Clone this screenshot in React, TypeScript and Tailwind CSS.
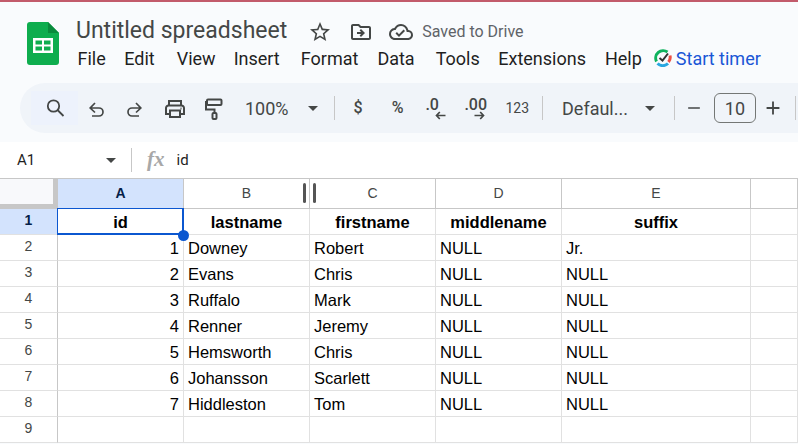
import { MdArrowDropDown, MdOutlineCloudDone, MdOutlineDriveFileMove, MdOutlineStarBorder, MdAdd, MdRemove } from 'react-icons/md'

const menus = [
  { label: 'File', cls: 'ml-[1.500px]' },
  { label: 'Edit', cls: 'ml-[18.500px]' },
  { label: 'View', cls: 'ml-[22px]' },
  { label: 'Insert', cls: 'ml-[18px]' },
  { label: 'Format', cls: 'ml-[21px]' },
  { label: 'Data', cls: 'ml-[19px]' },
  { label: 'Tools', cls: 'ml-[21px]' },
  { label: 'Extensions', cls: 'ml-[18.500px]' },
  { label: 'Help', cls: 'ml-[19px]' },
]
const rows = [
  ['1', 'Downey', 'Robert', 'NULL', 'Jr.'],
  ['2', 'Evans', 'Chris', 'NULL', 'NULL'],
  ['3', 'Ruffalo', 'Mark', 'NULL', 'NULL'],
  ['4', 'Renner', 'Jeremy', 'NULL', 'NULL'],
  ['5', 'Hemsworth', 'Chris', 'NULL', 'NULL'],
  ['6', 'Johansson', 'Scarlett', 'NULL', 'NULL'],
  ['7', 'Hiddleston', 'Tom', 'NULL', 'NULL'],
]

function SheetsLogo() {
  return (
    <svg width="32" height="43" viewBox="0 0 32 43" className="shrink-0">
      <path d="M3 0H21L32 11V40a3 3 0 0 1-3 3H3a3 3 0 0 1-3-3V3a3 3 0 0 1 3-3Z" fill="#0ead4e" />
      <path d="M21 0L32 11H21Z" fill="#0a8a3c" />
      <path d="M6 16H26V31H6ZM8.500 18.500V22.500H15V18.500ZM17 18.500V22.500H23.500V18.500ZM8.500 24.500V28.500H15V24.500ZM17 24.500V28.500H23.500V24.500Z" fill="#fff" fillRule="evenodd" />
    </svg>
  )
}

function TimerLogo() {
  return (
    <svg width="18" height="18" viewBox="0 0 18 18" className="shrink-0">
      <path d="M13.500 3A7.500 7.500 0 0 0 2.500 12.500" fill="none" stroke="#10b35e" strokeWidth="3" />
      <path d="M16 6.500A7.500 7.500 0 0 1 14.500 13" fill="none" stroke="#ee4f43" strokeWidth="3" />
      <path d="M3.500 14.500A7.500 7.500 0 0 0 14 14.500" fill="none" stroke="#2ba7e0" strokeWidth="3" />
      <path d="M5.500 9L8.500 11.500L14 4.500" fill="none" stroke="#333" strokeWidth="2" />
    </svg>
  )
}

function SearchIcon() {
  return (
    <svg width="24" height="24" viewBox="0 0 24 24" fill="none" stroke="currentColor" strokeWidth="1.800">
      <circle cx="10.500" cy="10" r="5.700" />
      <path d="M14.500 14L20.500 20" />
    </svg>
  )
}

function UndoIcon({ className }: { className?: string }) {
  return (
    <svg width="22" height="22" viewBox="0 0 22 22" fill="none" stroke="currentColor" strokeWidth="1.700" className={className}>
      <path d="M10 6L5.200 11L10 15.500M5.200 11H14a4 4 0 0 1 0 8H7" />
    </svg>
  )
}

function PrintIcon({ className }: { className?: string }) {
  return (
    <svg width="24" height="24" viewBox="0 0 24 24" fill="none" stroke="currentColor" strokeWidth="2" className={className}>
      <path d="M6 9.500V5H18V9.500" />
      <path d="M6 18H3V12a2.500 2.500 0 0 1 2.500-2.500h13A2.500 2.500 0 0 1 21 12V18H18" />
      <rect x="7" y="14.500" width="10" height="6.500" />
      <path d="M17.500 12.500h1" />
    </svg>
  )
}

function PaintIcon({ className }: { className?: string }) {
  return (
    <svg width="24" height="24" viewBox="0 0 24 24" fill="none" stroke="currentColor" strokeWidth="2" className={className}>
      <rect x="6" y="3.500" width="14.500" height="5.500" rx="1" />
      <path d="M6 6H5V13.500H13.500V17" />
      <rect x="11.500" y="17" width="4" height="6" rx="1" />
    </svg>
  )
}

function Sep() {
  return <div className="w-px h-6 bg-[#c7c7c7] shrink-0" />
}

function Arrow({ flip }: { flip?: boolean }) {
  return (
    <svg width="11" height="9" viewBox="0 0 11 9" className={flip ? 'absolute left-[10px] top-[16px] rotate-180' : 'absolute left-[10px] top-[16px]'}>
      <path d="M10.500 4.500H1.500M4.800 1L1.500 4.500L4.800 8" fill="none" stroke="#444746" strokeWidth="1.700" />
    </svg>
  )
}

function Toolbar() {
  return (
    <div className="ml-5 mt-[9px] h-[50px] rounded-l-[25px] bg-[#f0f4f9] flex items-center text-[#444746] overflow-hidden font-['Roboto',sans-serif]">
      <div className="ml-[11px] w-[47px] h-[34px] bg-[#edf2fc] flex items-center justify-center shrink-0">
        <SearchIcon />
      </div>
      <UndoIcon className="ml-[7px] shrink-0" />
      <UndoIcon className="ml-[17px] -scale-x-100 shrink-0" />
      <PrintIcon className="ml-[17px] shrink-0" />
      <PaintIcon className="ml-[14px] shrink-0" />
      <span className="ml-[20px] text-[18px]">100%</span>
      <MdArrowDropDown size={24} className="ml-[12px] shrink-0" />
      <div className="ml-[9px]"><Sep /></div>
      <span className="ml-[19px] text-[16px] font-medium">$</span>
      <span className="ml-[29px] text-[16px] font-medium">%</span>
      <div className="relative ml-[22px] w-[26px] h-[26px] shrink-0 text-[16px] leading-[20px] font-medium">
        .0
        <Arrow />
      </div>
      <div className="relative ml-[13px] w-[30px] h-[26px] shrink-0 text-[16px] leading-[20px] font-medium">
        .00
        <Arrow flip />
      </div>
      <span className="ml-[11px] text-[14px]">123</span>
      <div className="ml-[13px]"><Sep /></div>
      <span className="ml-[19px] text-[18px]">Defaul...</span>
      <MdArrowDropDown size={24} className="ml-[10px] shrink-0" />
      <div className="ml-[12px]"><Sep /></div>
      <MdRemove size={20} className="ml-[9px] shrink-0" />
      <div className="ml-[10px] w-[42px] h-[30px] shrink-0 rounded-[6px] border border-[#747775] flex items-center justify-center text-[18px]">10</div>
      <MdAdd size={22} className="ml-[6px] shrink-0" />
      <div className="ml-[11px]"><Sep /></div>
    </div>
  )
}

function ColHead({ label, active }: { label: string; active?: boolean }) {
  return (
    <div className={`flex items-center justify-center border-r border-b border-[#c7c7c7] text-[14px] ${active ? 'bg-[#d3e3fd] font-bold text-[#041e49]' : 'bg-white text-[#444746]'}`}>
      {label}
    </div>
  )
}

function RowHead({ n, active }: { n: number; active?: boolean }) {
  return (
    <div className={`flex items-center justify-center pb-[2px] border-r border-b text-[14px] border-b-[#e1e1e1] border-r-[#c7c7c7] ${active ? 'bg-[#d3e3fd] font-bold text-[#041e49]' : 'bg-white text-[#444746]'}`}>
      {n}
    </div>
  )
}

function Cell({ children, align, bold }: { children?: React.ReactNode; align?: string; bold?: boolean }) {
  return (
    <div className={`flex items-center px-[4px] pt-[2px] border-r border-b border-[#e1e1e1] text-[16.500px] text-black whitespace-nowrap overflow-hidden ${align ?? ''} ${bold ? 'font-bold justify-center' : ''}`}>
      {children}
    </div>
  )
}

export default function App() {
  return (
    <div className="w-[798px] h-[444px] overflow-hidden bg-[#f9fbfd] font-['Liberation_Sans',Arial,sans-serif]">
      <div className="h-[2px] bg-[#c25b6b]" />
      <div className="h-[72px] pl-[27px] pt-[15px] flex">
        <div className="pt-[5px]"><SheetsLogo /></div>
        <div className="ml-[17px] min-w-0 font-['Roboto',sans-serif]">
          <div className="flex items-center h-[27px] pt-[2px]">
            <span className="text-[23px] text-[#444746]">Untitled spreadsheet</span>
            <MdOutlineStarBorder size={24} className="ml-[21px] text-[#444746] shrink-0" />
            <MdOutlineDriveFileMove size={24} className="ml-[17px] text-[#444746] shrink-0" />
            <MdOutlineCloudDone size={24} className="ml-[16px] text-[#444746] shrink-0" />
            <span className="ml-[9px] text-[16px] text-[#5f6368] whitespace-nowrap">Saved to Drive</span>
          </div>
          <div className="flex items-center h-[28px] text-[18px] text-[#1f1f1f]">
            {menus.map((m) => (
              <span key={m.label} className={m.cls}>{m.label}</span>
            ))}
            <span className="ml-[12px]"><TimerLogo /></span>
            <span className="ml-[4px] text-[#1a56d6] whitespace-nowrap">Start timer</span>
          </div>
        </div>
      </div>
      <Toolbar />
      <div className="mt-[9px] h-[36px] bg-white flex items-center text-[#1f1f1f] font-['Roboto',sans-serif]">
        <span className="ml-[17px] w-[88px] text-[15px]">A1</span>
        <MdArrowDropDown size={24} className="text-[#444746] ml-[-6px]" />
        <div className="ml-[8px]"><Sep /></div>
        <span className="ml-[15px] font-['Liberation_Serif',serif] italic font-bold text-[21px] text-[#a8a8a8]">fx</span>
        <span className="ml-[12px] text-[15px]">id</span>
      </div>
      <div className="relative grid grid-cols-[58px_126px_126px_126px_126px_189px_1fr] grid-rows-[30px_26px_26px_26px_26px_26px_26px_26px_26px_26px] border-t border-[#c7c7c7] bg-white">
        <div className="bg-[#c7c7c7] pr-[5px] pb-[5px]">
          <div className="h-full bg-[#f8f9fb]" />
        </div>
        <ColHead label="A" active />
        <ColHead label="B" />
        <ColHead label="C" />
        <ColHead label="D" />
        <ColHead label="E" />
        <ColHead label="" />

        <RowHead n={1} active />
        <div className="relative flex items-center justify-center pt-[2px] border-r border-b border-[#e1e1e1] text-[16.500px] font-bold text-black">
          id
          <div className="absolute -inset-px border-l border-t border-r-2 border-b-2 border-[#0b57d0]" />
          <div className="absolute right-[-6px] bottom-[-7px] w-[11px] h-[11px] rounded-full bg-[#0b57d0] z-10" />
        </div>
        <Cell bold>lastname</Cell>
        <Cell bold>firstname</Cell>
        <Cell bold>middlename</Cell>
        <Cell bold>suffix</Cell>
        <Cell />

        {rows.map((r, i) => (
          <div key={r[0]} className="contents">
            <RowHead n={i + 2} />
            <Cell align="justify-end">{r[0]}</Cell>
            <Cell>{r[1]}</Cell>
            <Cell>{r[2]}</Cell>
            <Cell>{r[3]}</Cell>
            <Cell>{r[4]}</Cell>
            <Cell />
          </div>
        ))}
        <RowHead n={9} />
        <Cell /><Cell /><Cell /><Cell /><Cell /><Cell />

        <div className="absolute left-[303px] top-[4px] w-[3px] h-[20px] rounded-sm bg-[#555]" />
        <div className="absolute left-[313px] top-[4px] w-[3px] h-[20px] rounded-sm bg-[#555]" />
      </div>
    </div>
  )
}
